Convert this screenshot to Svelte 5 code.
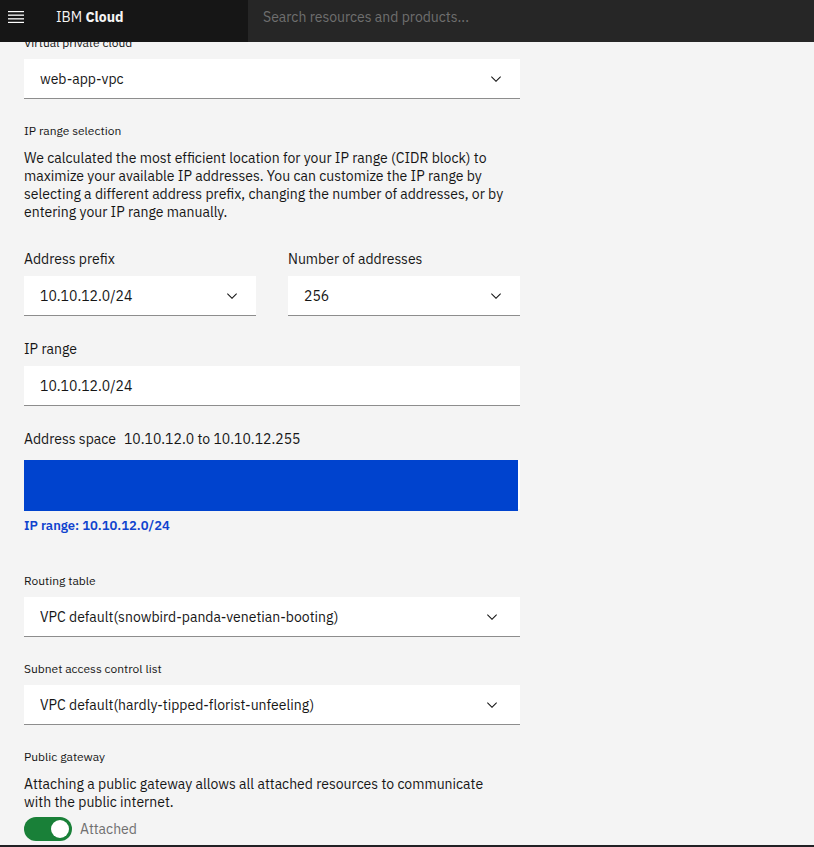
<script>
  let vpc = $state('web-app-vpc');
  let prefix = $state('10.10.12.0/24');
  let count = $state('256');
  let range = $state('10.10.12.0/24');
  let routing = $state('VPC default(snowbird-panda-venetian-booting)');
  let acl = $state('VPC default(hardly-tipped-florist-unfeeling)');
  let attached = $state(true);
</script>

{#snippet chevron()}
  <svg class="chevron" viewBox="0 0 16 16" width="16" height="16" aria-hidden="true">
    <path d="M8 11L3 6l.7-.7L8 9.6l4.3-4.3.7.7z" />
  </svg>
{/snippet}

<div class="page">
  <header>
    <div class="brand-area">
      <button class="menu" aria-label="Open menu">
        <svg width="16" height="12" viewBox="0 0 16 12" aria-hidden="true">
          <path d="M0 0h16v1H0zM0 11h16v1H0z" fill="#fff" />
          <path d="M0 4h16v1H0zM0 7h16v1H0z" fill="#d0d0d0" />
          <path d="M0 3h16v1H0zM0 8h16v1H0z" fill="#858585" />
          <path d="M0 1h16v1H0zM0 10h16v1H0z" fill="#444" />
        </svg>
      </button>
      <a class="brand" href="#home">IBM <b>Cloud</b></a>
    </div>
    <input class="search" type="search" aria-label="Search" placeholder="Search resources and products..." />
  </header>

  <main>
    <form>
      <div class="field">
        <label class="small" for="vpc">Virtual private cloud</label>
        <div class="control">
          <select id="vpc" bind:value={vpc}><option>web-app-vpc</option></select>
          {@render chevron()}
        </div>
      </div>

      <section class="description">
        <h2 class="small">IP range selection</h2>
        <p>
          We calculated the most efficient location for your IP range (CIDR block) to<br />
          maximize your available IP addresses. You can customize the IP range by<br />
          selecting a different address prefix, changing the number of addresses, or by<br />
          entering your IP range manually.
        </p>
      </section>

      <div class="pair">
        <div class="field">
          <label for="prefix">Address prefix</label>
          <div class="control">
            <select id="prefix" bind:value={prefix}><option>10.10.12.0/24</option></select>
            {@render chevron()}
          </div>
        </div>
        <div class="field">
          <label for="count">Number of addresses</label>
          <div class="control">
            <select id="count" bind:value={count}><option>256</option></select>
            {@render chevron()}
          </div>
        </div>
      </div>

      <div class="field range">
        <label for="range">IP range</label>
        <input id="range" type="text" bind:value={range} />
      </div>

      <section class="space">
        <div class="space-title"><span>Address space</span><span>10.10.12.0 to 10.10.12.255</span></div>
        <div class="bar"><div class="fill"></div></div>
        <strong>IP range: {range}</strong>
      </section>

      <div class="field">
        <label class="small" for="routing">Routing table</label>
        <div class="control native">
          <select id="routing" bind:value={routing}><option>VPC default(snowbird-panda-venetian-booting)</option></select>
          {@render chevron()}
        </div>
      </div>

      <div class="field">
        <label class="small" for="acl">Subnet access control list</label>
        <div class="control native">
          <select id="acl" bind:value={acl}><option>VPC default(hardly-tipped-florist-unfeeling)</option></select>
          {@render chevron()}
        </div>
      </div>

      <section class="gateway">
        <h2 class="small">Public gateway</h2>
        <p>
          Attaching a public gateway allows all attached resources to communicate<br />
          with the public internet.
        </p>
        <label class="switch">
          <input type="checkbox" bind:checked={attached} />
          <span>{attached ? 'Attached' : 'Detached'}</span>
        </label>
      </section>
    </form>
  </main>
  <footer></footer>
</div>

<style>
  :global(body) {
    background: #f4f4f4;
  }
  .page,
  .page * {
    box-sizing: border-box;
  }
  .page {
    font: 14px/18px "IBM Plex Sans", Roboto, "Liberation Sans", sans-serif;
    color: #161616;
    background: #f4f4f4;
  }
  header {
    position: fixed;
    top: 0;
    left: 0;
    right: 0;
    z-index: 2;
    display: flex;
    height: 42px;
    background: #161616;
  }
  .brand-area {
    display: flex;
    align-items: flex-start;
    flex: 0 0 248px;
    padding: 8px 8px 0;
    gap: 32px;
  }
  .menu {
    display: flex;
    padding: 3px 0 0;
    border: 0;
    background: none;
  }
  .brand {
    color: #f4f4f4;
    text-decoration: none;
  }
  .brand b {
    font-weight: 700;
  }
  .search {
    flex: 1;
    min-width: 0;
    margin: 0;
    padding: 0 15px 8px;
    border: 0;
    border-radius: 0;
    background: #262626;
    color: #f4f4f4;
    font: inherit;
    outline: 0;
    appearance: none;
  }
  .search::placeholder {
    color: #6f6f6f;
    opacity: 1;
  }
  main {
    padding: 35px 24px 4px;
  }
  form {
    max-width: 496px;
    display: flex;
    flex-direction: column;
    gap: 24px;
  }
  .field {
    display: flex;
    flex-direction: column;
    gap: 8px;
  }
  .small {
    margin: 0;
    font-size: 12px;
    font-weight: 400;
    line-height: 16px;
  }
  p {
    margin: 10px 0 0;
    white-space: nowrap;
  }
  .description {
    padding-bottom: 5px;
  }
  .pair {
    display: grid;
    grid-template-columns: 1fr 1fr;
    gap: 32px;
  }
  .control {
    display: grid;
    align-items: center;
  }
  .control > :global(*) {
    grid-area: 1 / 1;
  }
  select,
  .range input {
    width: 100%;
    height: 40px;
    margin: 0;
    padding: 0 16px;
    border: 0;
    border-bottom: 1px solid #8d8d8d;
    border-radius: 0;
    background: #fff;
    color: #161616;
    font: inherit;
    appearance: none;
  }
  .chevron {
    justify-self: end;
    margin-right: 16px;
    fill: #161616;
    pointer-events: none;
  }
  .native .chevron {
    margin-right: 20px;
  }
  .space {
    padding-bottom: 14px;
  }
  .space-title {
    display: flex;
    gap: 8px;
    margin-bottom: 12px;
  }
  .bar {
    height: 51px;
    padding-right: 2px;
    background: linear-gradient(#fff, #fff) top / 100% 49px no-repeat;
  }
  .fill {
    height: 100%;
    background: #0043ce;
  }
  strong {
    display: block;
    margin-top: 6px;
    color: #0f43ce;
    font-size: 13px;
    font-weight: 600;
  }
  .switch {
    display: flex;
    align-items: center;
    gap: 8px;
    width: max-content;
    margin-top: 6px;
    color: #6f6f6f;
  }
  .switch input {
    display: flex;
    align-items: center;
    width: 48px;
    height: 24px;
    margin: 0;
    padding: 0 3px;
    border-radius: 12px;
    background: #8d8d8d;
    appearance: none;
  }
  .switch input::before {
    content: "";
    width: 18px;
    height: 18px;
    border-radius: 50%;
    background: #fff;
  }
  .switch input:checked {
    justify-content: flex-end;
    background: #198038;
  }
  footer {
    height: 2px;
    background: #212124;
  }
</style>
